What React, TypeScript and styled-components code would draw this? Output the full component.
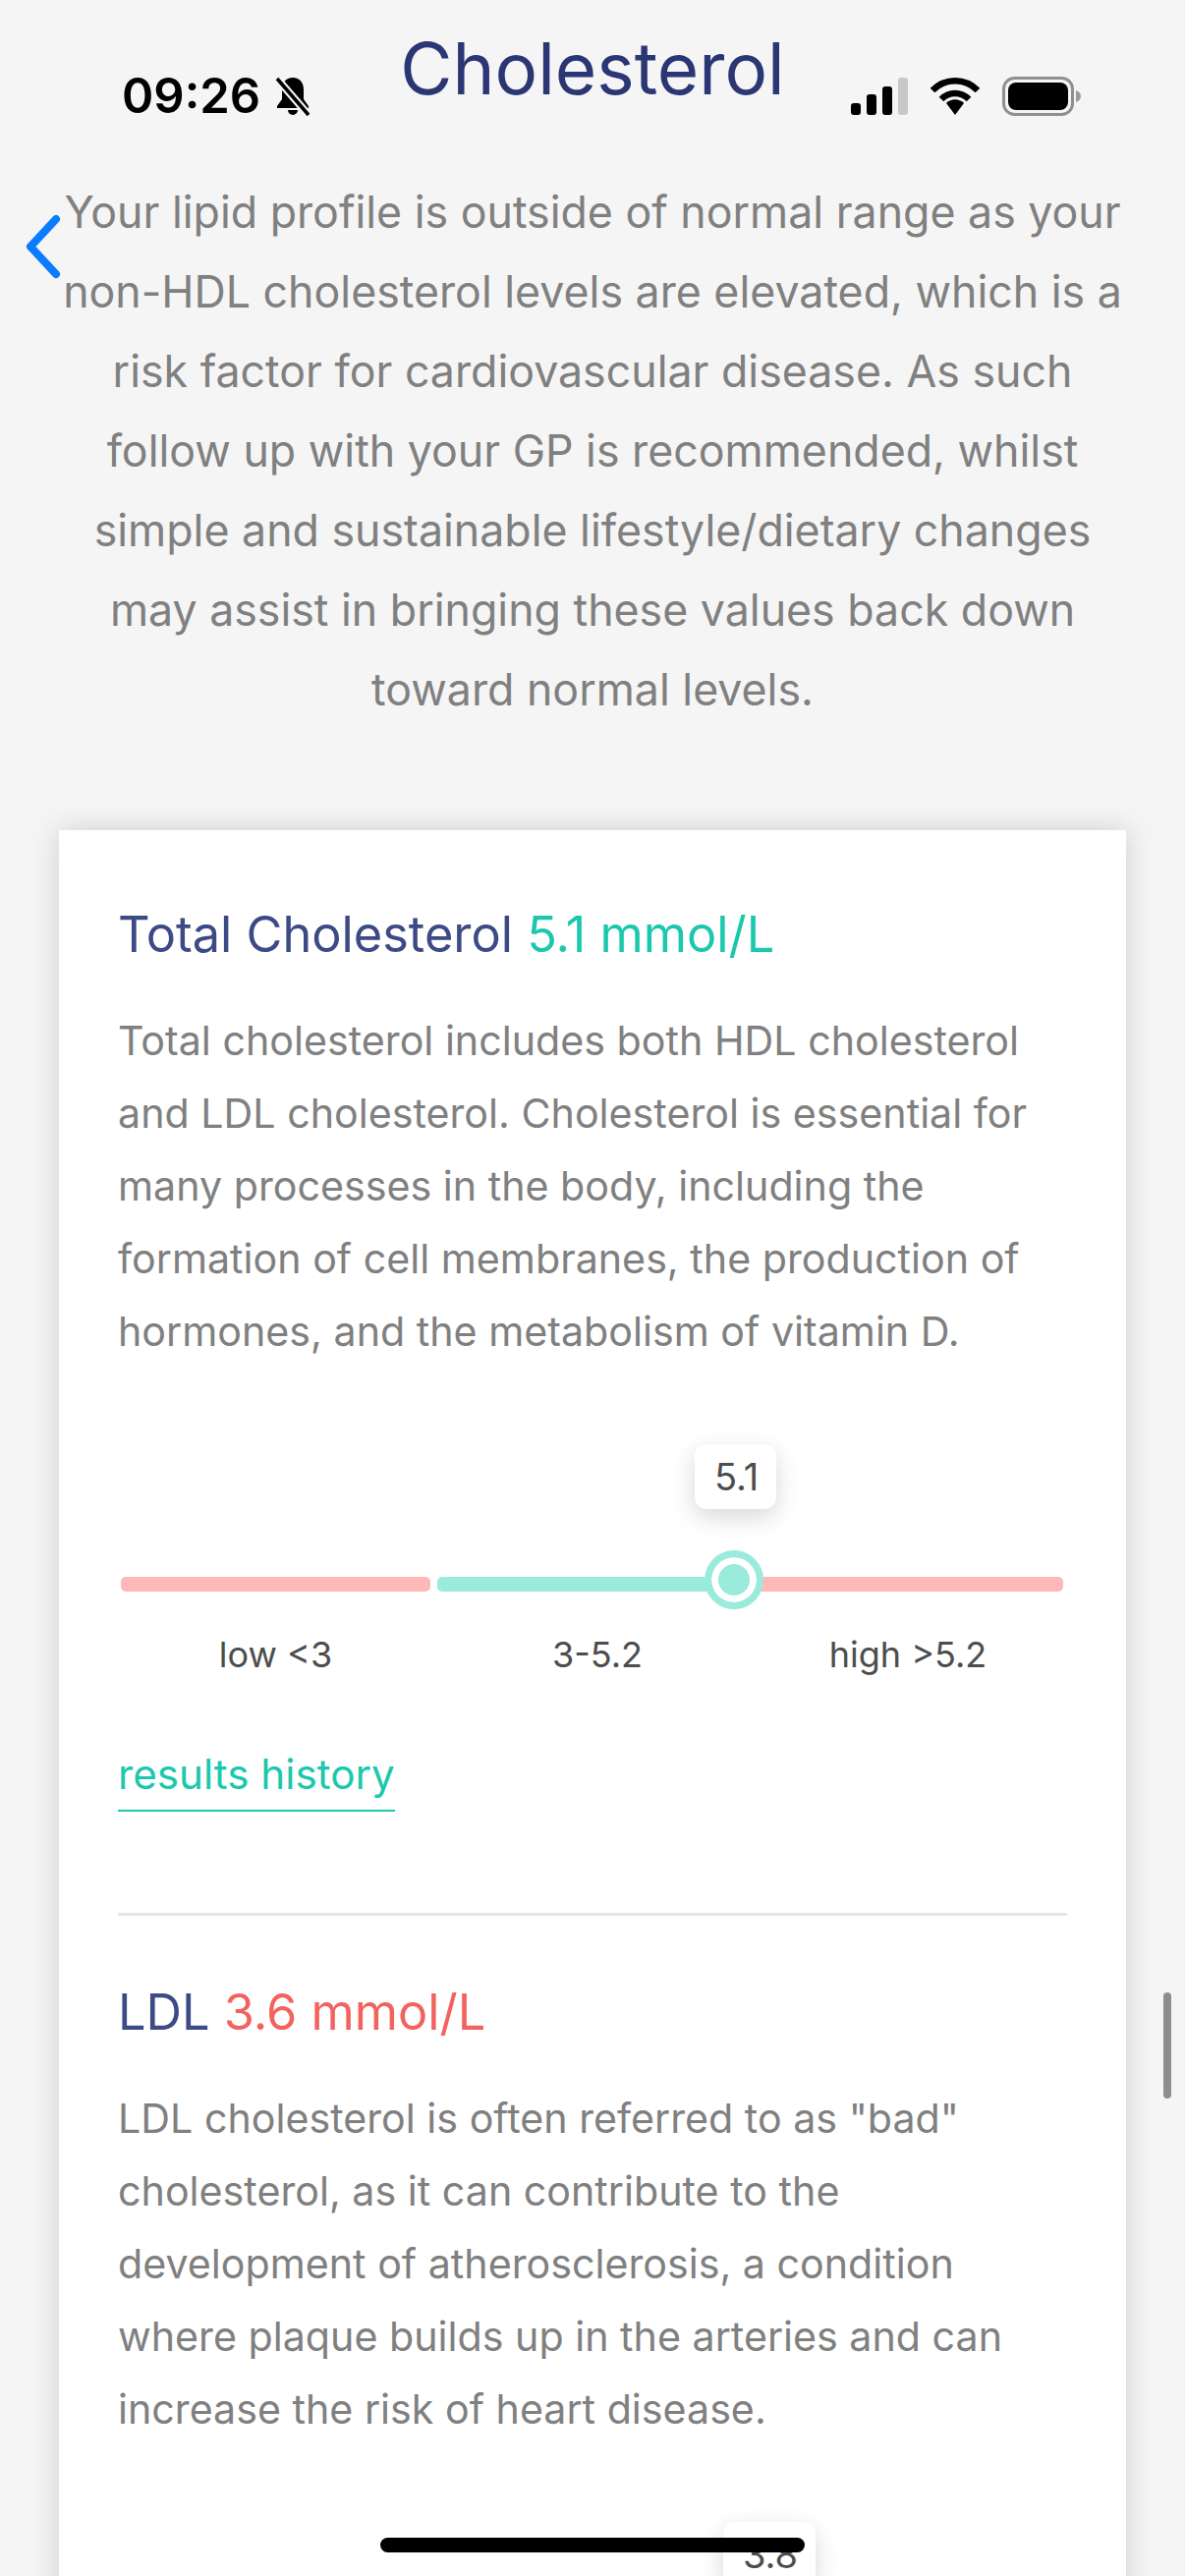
import React from "react";
import styled, { createGlobalStyle } from "styled-components";

const Global = createGlobalStyle`
  html, body { margin: 0; padding: 0; height: 2622px; overflow: hidden; background: #f5f5f5; }
  #root { height: 2622px; overflow: hidden; }
  * { box-sizing: border-box; }
`;
const Page = styled.div`
  position: relative;
  width: 1206px;
  height: 2622px;
  overflow: hidden;
  background: #f5f5f5;
  font-family: Inter, Roboto, "Liberation Sans", sans-serif;
  padding-top: 24px;
`;
const Title = styled.h1`
  margin: 0;
  height: 92px;
  font-size: 72.8px;
  line-height: 92px;
  font-weight: 400;
  text-align: center;
  color: #2b3674;
`;
const Intro = styled.p`
  margin: 60px 0 0;
  padding: 0 60px;
  font-size: 44.7px;
  line-height: 81px;
  color: #808080;
  text-align: center;
  white-space: nowrap;
`;
const Card = styled.section`
  margin: 102px 60px 0;
  height: 1900px;
  padding: 74px 60px 0;
  background: #fff;
  box-shadow: 0 0 28px rgba(0, 0, 0, 0.16);
`;
const Heading = styled.h2`
  margin: 0;
  font-size: 50.5px;
  line-height: 64px;
  font-weight: 400;
  color: #3c4a85;
`;
const Value = styled.span<{ $tone: "ok" | "bad" }>`
  color: ${(p) => (p.$tone === "ok" ? "#1cc8ad" : "#f2635f")};
`;
const Body = styled.p`
  margin: 39px 0 0;
  font-size: 41.2px;
  line-height: 74px;
  color: #808080;
  white-space: nowrap;
`;
const Slider = styled.div`
  position: relative;
  margin: 213px 0 0 3px;
  width: 959px;
  height: 15px;
  display: flex;
`;
const Segment = styled.div<{ $color: string; $width: number; $gap?: number }>`
  width: ${(p) => p.$width}px;
  margin-left: ${(p) => p.$gap ?? 0}px;
  height: 15px;
  border-radius: 5px;
  background: ${(p) => p.$color};
`;
const Thumb = styled.div<{ $left: number }>`
  position: absolute;
  top: -27px;
  left: ${(p) => p.$left}px;
  width: 60px;
  height: 60px;
  border-radius: 50%;
  background: #9aebdc;
  border: 7px solid #9aebdc;
  box-shadow: inset 0 0 0 7px #fff;
`;
const Tip = styled.div<{ $left: number; $width: number }>`
  position: absolute;
  top: -135px;
  left: ${(p) => p.$left}px;
  width: ${(p) => p.$width}px;
  height: 66px;
  padding-left: 2px;
  border-radius: 12px;
  background: #fff;
  box-shadow: 0 8px 24px rgba(0, 0, 0, 0.16);
  color: #4d4d4d;
  font-size: 38px;
  line-height: 66px;
  text-align: center;
`;
const Labels = styled.div`
  display: grid;
  grid-template-columns: 321px 334px 298px;
  margin: 38px 0 0;
  width: 959px;
  font-size: 36px;
  line-height: 52px;
  color: #4d4d4d;
  text-align: center;
`;
const HistoryLink = styled.a`
  display: inline-block;
  margin-top: 74px;
  height: 60px;
  border-bottom: 2px solid #1cc8ad;
  color: #1cc8ad;
  font-size: 42.2px;
  line-height: 44px;
`;
const Divider = styled.hr`
  margin: 103px 0 0;
  width: 966px;
  border: 0;
  border-top: 3px solid #e6e6e6;
`;
const Section = styled.div`
  margin-top: 66px;
`;
const Overlay = styled.div`
  position: absolute;
  left: 0;
  top: 0;
  width: 1206px;
  height: 0;
`;
const StatusBar = styled.div`
  position: absolute;
  top: 78px;
  left: 124px;
  width: 976px;
  height: 40px;
  display: flex;
  align-items: center;
`;
const Clock = styled.span`
  font-family: Inter, "Liberation Sans", sans-serif;
  font-weight: 600;
  font-size: 49px;
  line-height: 40px;
  color: #000;
  margin-right: 12px;
`;
const Spacer = styled.div`
  flex: 1;
`;
const Back = styled.svg`
  position: absolute;
  left: 25px;
  top: 218px;
`;
const Indicator = styled.div`
  position: absolute;
  left: 387px;
  top: 2583px;
  width: 432px;
  height: 15px;
  border-radius: 8px;
  background: #000;
`;
const ScrollThumb = styled.div`
  position: absolute;
  left: 1184px;
  top: 2028px;
  width: 8px;
  height: 108px;
  border-radius: 4px;
  background: #8e8e8e;
`;

export default function App() {
  return (
    <Page>
      <Global />
      <Title>Cholesterol</Title>
      <Intro>
        Your lipid profile is outside of normal range as your<br />
        non-HDL cholesterol levels are elevated, which is a<br />
        risk factor for cardiovascular disease. As such<br />
        follow up with your GP is recommended, whilst<br />
        simple and sustainable lifestyle/dietary changes<br />
        may assist in bringing these values back down<br />
        toward normal levels.
      </Intro>
      <Card>
        <Heading>
          Total Cholesterol <Value $tone="ok">5.1 mmol/L</Value>
        </Heading>
        <Body>
          Total cholesterol includes both HDL cholesterol<br />
          and LDL cholesterol. Cholesterol is essential for<br />
          many processes in the body, including the<br />
          formation of cell membranes, the production of<br />
          hormones, and the metabolism of vitamin D.
        </Body>
        <Slider>
          <Segment $color="#ffb8b8" $width={315} />
          <Segment $color="#9aebdc" $width={300} $gap={7} />
          <Segment $color="#ffb8b8" $width={337} />
          <Tip $left={584} $width={83}>5.1</Tip>
          <Thumb $left={594} />
        </Slider>
        <Labels>
          <span>low &lt;3</span>
          <span>3-5.2</span>
          <span>high &gt;5.2</span>
        </Labels>
        <HistoryLink>results history</HistoryLink>
        <Divider />
        <Section>
          <Heading>
            LDL <Value $tone="bad">3.6 mmol/L</Value>
          </Heading>
          <Body>
            LDL cholesterol is often referred to as "bad"<br />
            cholesterol, as it can contribute to the<br />
            development of atherosclerosis, a condition<br />
            where plaque builds up in the arteries and can<br />
            increase the risk of heart disease.
          </Body>
          <Slider>
            <Tip $left={613} $width={94}>3.8</Tip>
          </Slider>
        </Section>
      </Card>
      <Overlay>
        <StatusBar>
          <Clock>09:26</Clock>
          <svg width="42" height="42" viewBox="0 0 42 42">
            <path d="M21 2c-7 0-11 5-11 12v10l-5 7v2h32v-2l-5-7V14c0-7-4-12-11-12z" fill="#000" />
            <path d="M16 35h10a5 5 0 0 1-10 0z" fill="#000" />
            <path d="M5 3l32 37" stroke="#f5f5f5" strokeWidth="8" />
            <path d="M5 3l32 37" stroke="#000" strokeWidth="3.5" />
          </svg>
          <Spacer />
          <svg width="58" height="38" viewBox="0 0 58 38">
            <rect x="0" y="26" width="10" height="12" rx="3" fill="#000" />
            <rect x="16" y="17" width="10" height="21" rx="3" fill="#000" />
            <rect x="32" y="9" width="10" height="29" rx="3" fill="#000" />
            <rect x="48" y="0" width="10" height="38" rx="3" fill="#c8c8c8" />
          </svg>
          <svg width="52" height="38" viewBox="0 0 52 38" style={{ marginLeft: 22, marginRight: 22 }}>
            <path d="M3 13C16 0 36 0 49 13" fill="none" stroke="#000" strokeWidth="6.5" />
            <path d="M12 22c8-8 20-8 28 0" fill="none" stroke="#000" strokeWidth="6.5" />
            <path d="M17 26c5-5 13-5 18 0L26 38z" fill="#000" />
          </svg>
          <svg width="80" height="40" viewBox="0 0 80 40">
            <rect x="1.5" y="1.5" width="70" height="37" rx="11" fill="none" stroke="#8f8f8f" strokeWidth="3" />
            <rect x="6" y="6" width="61" height="28" rx="8" fill="#000" />
            <path d="M75 14c3 1 5 3 5 6s-2 5-5 6z" fill="#9a9a9a" />
          </svg>
        </StatusBar>
        <Back width="40" height="66" viewBox="0 0 40 66">
          <path d="M32 5L6 33l26 28" fill="none" stroke="#0a7cff" strokeWidth="8" strokeLinecap="round" strokeLinejoin="round" />
        </Back>
        <ScrollThumb />
        <Indicator />
      </Overlay>
    </Page>
  );
}
